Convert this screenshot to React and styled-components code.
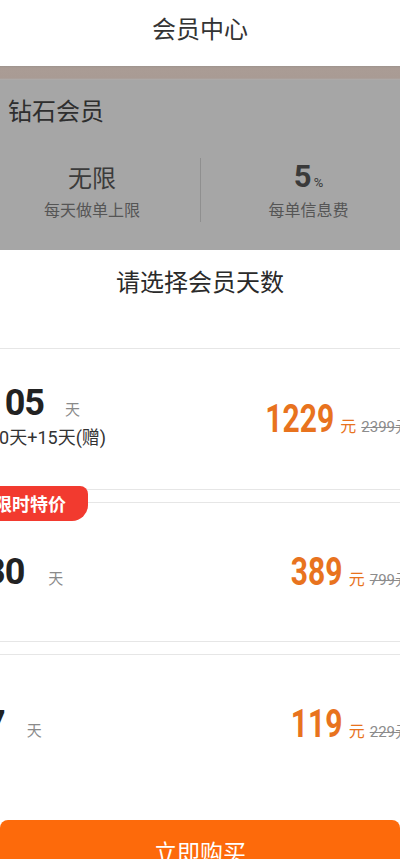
import React from "react";
import styled, { createGlobalStyle } from "styled-components";

const GlobalStyle = createGlobalStyle`
  html, body {
    margin: 0;
    padding: 0;
    background: #fff;
    overflow: hidden;
  }
  body {
    font-family: "Noto Sans CJK SC", "Noto Sans", Roboto, sans-serif;
  }
`;

const Page = styled.div`
  width: 432px;
  margin-left: -16px;
  height: 859px;
  overflow: hidden;
`;

const Header = styled.div`
  position: relative;
  height: 66px;
  display: flex;
  justify-content: center;
  align-items: flex-start;
  background: #fff;
`;

const Title = styled.div`
  font-size: 24px;
  line-height: 28px;
  margin-top: 14px;
  color: #333;
`;

const Back = styled.svg`
  position: absolute;
  left: 2px;
  top: 18px;
`;

const MemberPanel = styled.div`
  background: #a6a6a6;
  padding-bottom: 28px;
`;

const Strip = styled.div`
  height: 14px;
  background: linear-gradient(#9d938e 0, #aa9c95 2px, #a99b94 12px, #adadad 14px);
`;

const LevelName = styled.div`
  padding: 16px 0 0 24px;
  font-size: 24px;
  line-height: 28px;
  color: #2e2e2e;
`;

const Stats = styled.div`
  display: grid;
  grid-template-columns: 1fr 1fr;
  margin-top: 34px;
`;

const Stat = styled.div`
  height: 64px;
  display: flex;
  flex-direction: column;
  align-items: center;
  padding-top: 2px;
  box-sizing: border-box;
  border-left: ${(p) => (p.divided ? "1px solid #8f8f8f" : "none")};
`;

const StatValue = styled.div`
  font-size: 24px;
  line-height: 34px;
  height: 34px;
  color: #3b3b3b;
`;

const Percent = styled.span`
  font-family: Roboto, "Liberation Sans", sans-serif;
  font-weight: 700;
  font-size: 31px;
  line-height: 34px;
  color: #3a3a3a;

  small {
    font-weight: 400;
    font-size: 13px;
    margin-left: 2px;
  }
`;

const StatLabel = styled.div`
  margin-top: 4px;
  font-size: 16px;
  line-height: 22px;
  color: #555;
`;

const SectionTitle = styled.div`
  padding-top: 19px;
  margin-bottom: 55px;
  text-align: center;
  font-size: 24px;
  line-height: 24px;
  color: #2a2a2a;
`;

const CardList = styled.div`
  display: flex;
  flex-direction: column;
  gap: 12px;
`;

const Card = styled.div`
  position: relative;
  height: ${(p) => p.h}px;
  box-sizing: border-box;
  border: 1px solid #e6e6e6;
  border-radius: 8px;
  background: #fff;
  display: flex;
  align-items: center;
  justify-content: space-between;
  padding: 0 5px 0 0;
`;

const Tag = styled.div`
  position: absolute;
  left: -1px;
  top: -17px;
  height: 35px;
  padding: 0 22px 0 10px;
  background: #f23a2f;
  border-radius: 0 8px 16px 0;
  color: #fff;
  font-size: 18px;
  font-weight: 700;
  line-height: 35px;
`;

const DayBlock = styled.div`
  display: flex;
  flex-direction: column;
  padding-bottom: ${(p) => (p.sub ? 6 : 0)}px;
`;

const DayLine = styled.div`
  display: flex;
  align-items: baseline;
  height: 40px;
`;

const Days = styled.span`
  font-family: Roboto, "Liberation Sans", sans-serif;
  font-weight: 700;
  font-size: 36px;
  line-height: 40px;
  letter-spacing: -1px;
  color: #222;
`;

const Unit = styled.span`
  margin-left: ${(p) => p.gap}px;
  font-size: 15px;
  color: #8a8a8a;
`;

const Bonus = styled.div`
  margin-top: 4px;
  padding-left: 4px;
  font-size: 18px;
  line-height: 22px;
  color: #333;
  font-family: Roboto, "Noto Sans CJK SC", sans-serif;
`;

const PriceLine = styled.div`
  display: flex;
  align-items: baseline;
`;

const Price = styled.span`
  display: inline-block;
  font-family: Roboto, "Liberation Sans", sans-serif;
  font-weight: 700;
  font-size: 38px;
  line-height: 40px;
  color: #e8731e;
  transform: scaleX(0.79);
  transform-origin: right center;
  margin-right: -1px;
`;

const Yuan = styled.span`
  margin-left: 7px;
  font-size: 16px;
  color: #e8731e;
`;

const OldPrice = styled.span`
  margin-left: 5px;
  font-size: 15px;
  color: #8c8c8c;
  text-decoration: line-through;
  font-family: Roboto, "Noto Sans CJK SC", sans-serif;
`;

const Footer = styled.div`
  position: fixed;
  left: -16px;
  bottom: -23px;
  width: 432px;
  height: 90px;
  box-sizing: border-box;
  padding: 28px 16px 0;
  background: #fff;
`;

const BuyButton = styled.button`
  width: 100%;
  height: 62px;
  border: none;
  border-radius: 8px;
  background: #fd6a0b;
  color: #fff;
  font-family: "Noto Sans CJK SC", sans-serif;
  font-size: 23px;
  line-height: 62px;
  padding: 0;
`;

const plans = [
  { days: "105", gap: 21, bonus: "90天+15天(赠)", price: "1229", old: "2399元", h: 142 },
  { days: "30", gap: 24, price: "389", old: "799元", h: 140, tag: "限时特价" },
  { days: "7", gap: 22, price: "119", old: "229元", h: 140 },
];

export default function App() {
  return (
    <>
      <GlobalStyle />
      <Page>
        <Header>
          <Back width="20" height="20" viewBox="0 0 20 20" fill="none">
            <path d="M13 3 L6 10 L13 17" stroke="#d0d0d0" strokeWidth="2" />
          </Back>
          <Title>会员中心</Title>
        </Header>

        <MemberPanel>
          <Strip />
          <LevelName>钻石会员</LevelName>
          <Stats>
            <Stat>
              <StatValue>无限</StatValue>
              <StatLabel>每天做单上限</StatLabel>
            </Stat>
            <Stat divided>
              <StatValue>
                <Percent>
                  5<small>%</small>
                </Percent>
              </StatValue>
              <StatLabel>每单信息费</StatLabel>
            </Stat>
          </Stats>
        </MemberPanel>

        <SectionTitle>请选择会员天数</SectionTitle>

        <CardList>
          {plans.map((p) => (
            <Card key={p.days} h={p.h}>
              {p.tag && <Tag>{p.tag}</Tag>}
              <DayBlock sub={!!p.bonus}>
                <DayLine>
                  <Days>{p.days}</Days>
                  <Unit gap={p.gap}>天</Unit>
                </DayLine>
                {p.bonus && <Bonus>{p.bonus}</Bonus>}
              </DayBlock>
              <PriceLine>
                <Price>{p.price}</Price>
                <Yuan>元</Yuan>
                <OldPrice>{p.old}</OldPrice>
              </PriceLine>
            </Card>
          ))}
        </CardList>
      </Page>
      <Footer>
        <BuyButton>立即购买</BuyButton>
      </Footer>
    </>
  );
}
